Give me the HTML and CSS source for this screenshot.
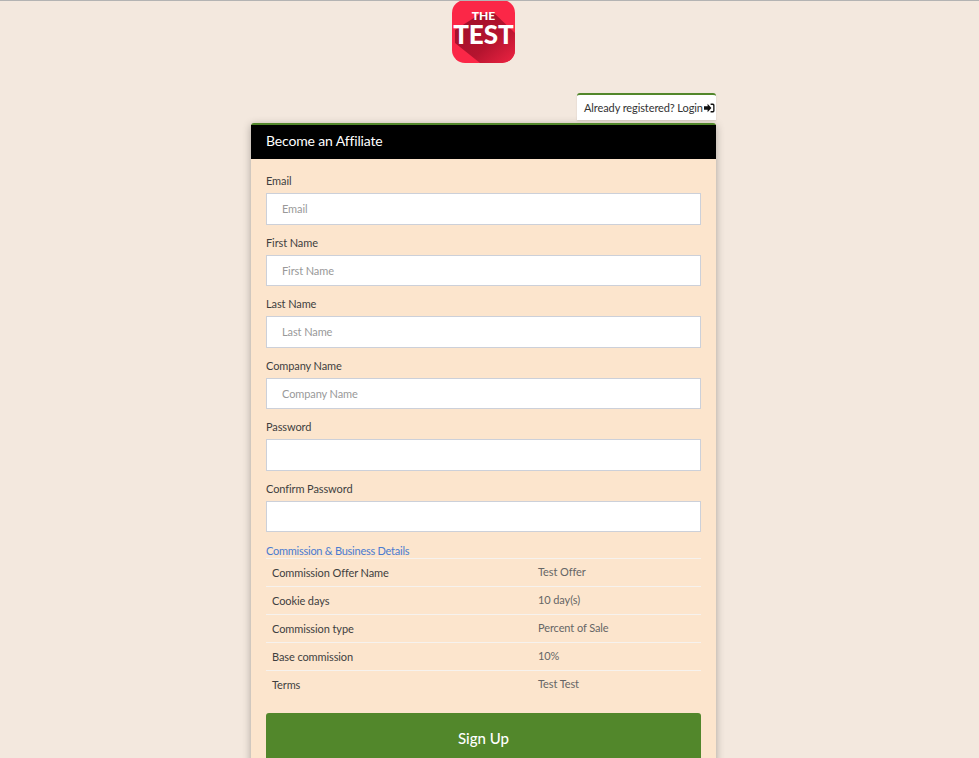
FILE: index.html
```html
<!DOCTYPE HTML>
<html>

<head>
    <meta charset="utf-8">
    <title>Become an Affiliate</title>
    <link rel="stylesheet" href="styles.css">
</head>

<body>
    <div class="logo-row">
        <div class="logo">
            <svg class="logo-shadow" width="63" height="63" viewBox="0 0 63 63">
                <defs>
                    <linearGradient id="logo-fade" x1="0.1" y1="0.1" x2="1" y2="1">
                        <stop offset="0" stop-color="#a0102a"></stop>
                        <stop offset="0.55" stop-color="#b5142f"></stop>
                        <stop offset="1" stop-color="#ee2342"></stop>
                    </linearGradient>
                </defs>
                <path d="M28 14 L42 13 L63 33 L63 63 L28 63 L3 43 L3 30 Z" fill="url(#logo-fade)"></path>
            </svg>
            <span class="logo-the">THE</span>
            <span class="logo-test">TEST</span>
        </div>
    </div>

    <div class="wrap">
        <div class="login-row">
            <a class="login-tab" href="#">Already registered? Login
                <svg class="login-icon" width="11" height="10" viewBox="0 0 11 10">
                    <path d="M0 3.2 H3.6 V0.8 L7.4 5 L3.6 9.2 V6.8 H0 Z" fill="#111"></path>
                    <path d="M6.6 0.6 H9 Q10.5 0.6 10.5 2.2 V7.8 Q10.5 9.4 9 9.4 H6.6 V8 H8.6 Q9.2 8 9.2 7.4 V2.6 Q9.2 2 8.6 2 H6.6 Z" fill="#111"></path>
                </svg>
            </a>
        </div>

        <div class="panel">
            <div class="panel-head">Become an Affiliate</div>
            <form class="panel-body">
                <div class="field">
                    <label>Email</label>
                    <input type="text" placeholder="Email">
                </div>
                <div class="field">
                    <label>First Name</label>
                    <input type="text" placeholder="First Name">
                </div>
                <div class="field">
                    <label>Last Name</label>
                    <input type="text" placeholder="Last Name">
                </div>
                <div class="field">
                    <label>Company Name</label>
                    <input type="text" placeholder="Company Name">
                </div>
                <div class="field">
                    <label>Password</label>
                    <input type="password">
                </div>
                <div class="field">
                    <label>Confirm Password</label>
                    <input type="password">
                </div>

                <div class="details-title">Commission &amp; Business Details</div>
                <table class="details">
                    <tr>
                        <th>Commission Offer Name</th>
                        <td>Test Offer</td>
                    </tr>
                    <tr>
                        <th>Cookie days</th>
                        <td>10 day(s)</td>
                    </tr>
                    <tr>
                        <th>Commission type</th>
                        <td>Percent of Sale</td>
                    </tr>
                    <tr>
                        <th>Base commission</th>
                        <td>10%</td>
                    </tr>
                    <tr>
                        <th>Terms</th>
                        <td>Test Test</td>
                    </tr>
                </table>

                <button class="signup" type="button">Sign Up</button>
            </form>
        </div>
    </div>
</body>

</html>
```

FILE: styles.css
```css
html {
    overflow: hidden;
}

body {
    margin: 0;
    padding-right: 12px;
    background-color: #f3e8de;
    border-top: 1px solid #b3b3b3;
    font-family: "Lato", sans-serif;
    font-size: 11px;
    letter-spacing: -0.1px;
    color: #444;
}

/* logo */

.logo-row {
    display: flex;
    justify-content: center;
    margin-top: -1px;
}

.logo {
    position: relative;
    width: 63px;
    height: 63px;
    border-radius: 13px;
    overflow: hidden;
    background-color: #fb2747;
    color: #fff;
    font-weight: 900;
    letter-spacing: 0;
    text-align: center;
}

.logo-shadow {
    position: absolute;
    top: 0;
    left: 0;
}

.logo-the {
    position: absolute;
    top: 10px;
    left: 0;
    width: 100%;
    font-size: 12px;
    line-height: 12px;
}

.logo-test {
    position: absolute;
    top: 21px;
    left: 0;
    width: 100%;
    font-size: 26px;
    line-height: 27px;
}

/* page column */

.wrap {
    width: 465px;
    margin: 30px auto 0;
}

.login-row {
    display: flex;
    justify-content: flex-end;
}

.login-tab {
    display: flex;
    align-items: center;
    justify-content: space-between;
    box-sizing: border-box;
    width: 139px;
    height: 27px;
    padding: 0 1px 0 7px;
    border-top: 2px solid #52872b;
    border-radius: 3px 3px 0 0;
    background-color: #fff;
    box-shadow: 0 1px 2px rgba(0, 0, 0, 0.12);
    color: #333;
    font-size: 11px;
    white-space: nowrap;
    text-decoration: none;
}

.login-icon {
    flex: none;
}

.panel {
    margin-top: 3px;
    border-top: 2px solid #52872b;
    border-radius: 3px 3px 0 0;
    background-color: #fce5cd;
    box-shadow: 0 2px 8px rgba(0, 0, 0, 0.3);
}

.panel-head {
    height: 34px;
    padding-left: 15px;
    background-color: #000;
    color: #fff;
    font-size: 14px;
    letter-spacing: -0.15px;
    line-height: 32px;
}

.panel-body {
    padding: 15px 15px 20px;
}

/* form */

.field {
    margin-bottom: 11px;
}

.field label {
    display: block;
    height: 19px;
    font-size: 11px;
    line-height: 13px;
    color: #3f3f3f;
}

.field input {
    display: block;
    box-sizing: border-box;
    width: 100%;
    height: 31.5px;
    padding: 0 15px;
    border: 1px solid #ccd0d9;
    background-color: #fff;
    font-family: "Lato", sans-serif;
    font-size: 11px;
    letter-spacing: -0.1px;
}

.field input::placeholder {
    color: #999;
}

/* commission details */

.details-title {
    margin-top: 8px;
    height: 15px;
    font-size: 11px;
    letter-spacing: -0.25px;
    line-height: 15px;
    color: #4a7bd0;
}

.details {
    width: 100%;
    border-collapse: collapse;
    font-size: 11px;
}

.details th,
.details td {
    padding: 0 6px;
    border-top: 1px solid #f6f2ee;
    text-align: left;
    font-weight: normal;
}

.details th {
    width: 254px;
    height: 27px;
    color: #3f3f3f;
}

.details td {
    height: 25px;
    padding-bottom: 2px;
    color: #666;
}

.signup {
    display: block;
    width: 100%;
    height: 50px;
    margin-top: 15px;
    border: 0;
    border-radius: 3px;
    background-color: #52872b;
    color: #fff;
    font-family: "Lato", sans-serif;
    font-size: 15px;
    font-weight: 500;
}
```
